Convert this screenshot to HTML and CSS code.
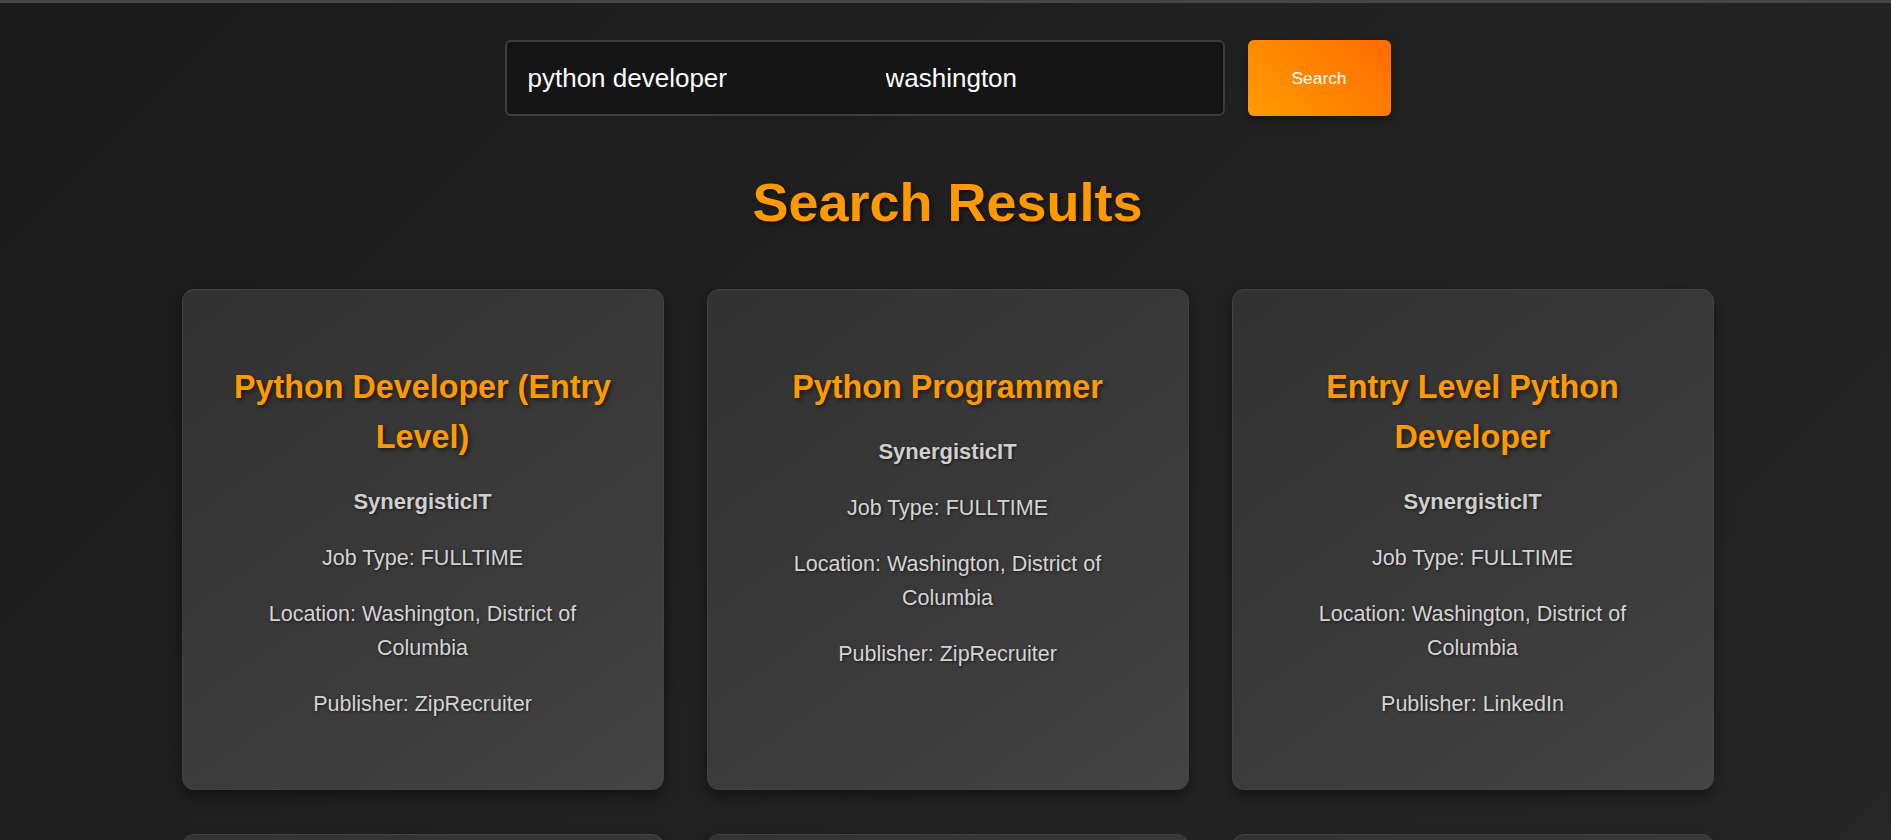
FILE: index.html
```html
<!DOCTYPE html>
<html lang="en">
<head>
<meta charset="utf-8">
<title>Job Search</title>
<link rel="stylesheet" href="styles.css">
</head>
<body>
<div class="topbar"></div>
<main class="page">
  <form class="search-form">
    <div class="search-box">
      <input class="search-input" type="text" value="python developer">
      <input class="search-input" type="text" value="washington">
    </div>
    <button class="search-btn" type="button">Search</button>
  </form>

  <h1 class="results-title">Search Results</h1>

  <section class="results-grid">
    <article class="job-card">
      <h2 class="job-title">Python Developer (Entry Level)</h2>
      <p class="job-company">SynergisticIT</p>
      <p class="job-info">Job Type: FULLTIME</p>
      <p class="job-info">Location: Washington, District of Columbia</p>
      <p class="job-info">Publisher: ZipRecruiter</p>
    </article>
    <article class="job-card">
      <h2 class="job-title">Python Programmer</h2>
      <p class="job-company">SynergisticIT</p>
      <p class="job-info">Job Type: FULLTIME</p>
      <p class="job-info">Location: Washington, District of Columbia</p>
      <p class="job-info">Publisher: ZipRecruiter</p>
    </article>
    <article class="job-card">
      <h2 class="job-title">Entry Level Python Developer</h2>
      <p class="job-company">SynergisticIT</p>
      <p class="job-info">Job Type: FULLTIME</p>
      <p class="job-info">Location: Washington, District of Columbia</p>
      <p class="job-info">Publisher: LinkedIn</p>
    </article>
    <article class="job-card">
      <h2 class="job-title">Junior Python Developer</h2>
      <p class="job-company">SynergisticIT</p>
      <p class="job-info">Job Type: FULLTIME</p>
      <p class="job-info">Location: Washington, District of Columbia</p>
      <p class="job-info">Publisher: Indeed</p>
    </article>
    <article class="job-card">
      <h2 class="job-title">Python Software Engineer</h2>
      <p class="job-company">SynergisticIT</p>
      <p class="job-info">Job Type: FULLTIME</p>
      <p class="job-info">Location: Washington, District of Columbia</p>
      <p class="job-info">Publisher: ZipRecruiter</p>
    </article>
    <article class="job-card">
      <h2 class="job-title">Backend Python Developer</h2>
      <p class="job-company">SynergisticIT</p>
      <p class="job-info">Job Type: FULLTIME</p>
      <p class="job-info">Location: Washington, District of Columbia</p>
      <p class="job-info">Publisher: LinkedIn</p>
    </article>
  </section>
</main>
</body>
</html>
```

FILE: styles.css
```css
* {
  box-sizing: border-box;
}

html, body {
  margin: 0;
  padding: 0;
}

body {
  font-family: "Liberation Sans", Arial, sans-serif;
  background: linear-gradient(135deg, #1b1b1b 0%, #222222 60%, #262626 100%);
  background-attachment: fixed;
  color: #d0d0d0;
  min-height: 100vh;
}

.topbar {
  height: 3px;
  background: #454545;
}

.page {
  padding: 37px 0 40px 4px;
  display: flex;
  flex-direction: column;
  align-items: center;
}

.search-form {
  display: flex;
  gap: 23px;
  margin: 0;
}

.search-box {
  display: flex;
  width: 720px;
  height: 76px;
  background: #151515;
  border: 2px solid #3d3d3d;
  border-radius: 6px;
}

.search-input {
  flex: 1;
  min-width: 0;
  padding: 0 21px;
  border: none;
  outline: none;
  background: transparent;
  color: #ffffff;
  font-family: "Liberation Sans", Arial, sans-serif;
  font-size: 26px;
}

.search-btn {
  width: 143px;
  height: 76px;
  border: none;
  border-radius: 6px;
  background: linear-gradient(45deg, #ff9c00 0%, #ff8400 50%, #ff6a00 100%);
  color: #ffffff;
  font-family: "Liberation Sans", Arial, sans-serif;
  font-size: 17.4px;
  box-shadow: 0 4px 10px rgba(0, 0, 0, 0.35);
  cursor: pointer;
}

.results-title {
  margin: 56px 0 56px;
  font-size: 54px;
  line-height: 61px;
  font-weight: bold;
  color: #ff9900;
  text-shadow: 2px 2px 4px rgba(0, 0, 0, 0.6);
}

.results-grid {
  display: grid;
  grid-template-columns: repeat(3, 482px);
  column-gap: 43px;
  row-gap: 44px;
}

.job-card {
  display: flex;
  flex-direction: column;
  gap: 23px;
  padding: 72px 45px 68px;
  border: 1px solid #434343;
  border-radius: 12px;
  background: linear-gradient(145deg, #323232 0%, #3a3a3a 55%, #444444 100%);
  box-shadow: 0 6px 14px rgba(0, 0, 0, 0.45);
  text-align: center;
}

.job-title {
  margin: 0 0 -1px;
  font-size: 32.3px;
  line-height: 50px;
  font-weight: bold;
  color: #ff9900;
  text-shadow: 2px 2px 4px rgba(0, 0, 0, 0.55);
}

.job-company {
  margin: 0;
  font-size: 22px;
  line-height: 35px;
  font-weight: bold;
  color: #cfcfcf;
  text-shadow: 1px 1px 3px rgba(0, 0, 0, 0.6);
}

.job-info {
  margin: 0;
  font-size: 21.5px;
  line-height: 33.3px;
  color: #d4d4d4;
  text-shadow: 1px 1px 3px rgba(0, 0, 0, 0.6);
}
```
